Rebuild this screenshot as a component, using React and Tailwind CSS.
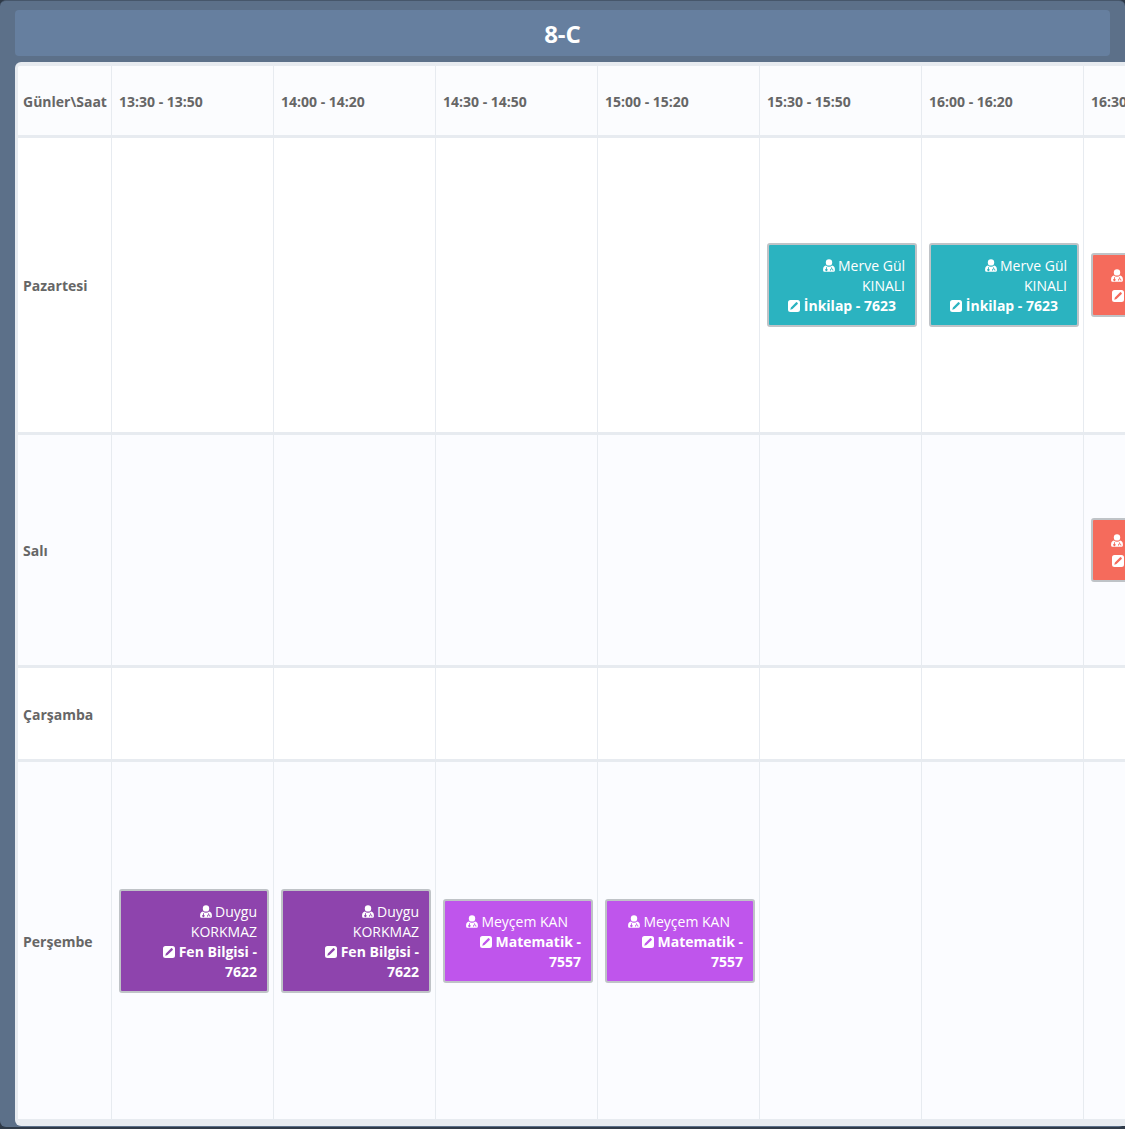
import React from 'react';

const times = ['13:30 - 13:50', '14:00 - 14:20', '14:30 - 14:50', '15:00 - 15:20', '15:30 - 15:50', '16:00 - 16:20', '16:30 - 16:50'];

// teacherGap / lessonGap: trailing space the source leaves after unwrapped text
const merve = { teacher: 'Merve Gül KINALI', lesson: 'İnkilap - 7623', color: 'bg-[#2bb3c0]', lessonGap: 'pr-[9px]' };
const duygu = { teacher: 'Duygu KORKMAZ', lesson: 'Fen Bilgisi - 7622', color: 'bg-[#8e44ad]' };
const meycem = { teacher: 'Meyçem KAN', lesson: 'Matematik - 7557', color: 'bg-[#bf55ec]', teacherGap: 'pr-[13px]' };
const red = { teacher: 'Gülşen ÖZTÜRK', lesson: 'İngilizce - 7601', color: 'bg-[#f56b5c]' };

// keep lessons by column index, empty cells stay null
const rows = [
  { day: 'Pazartesi', height: 'h-[294px]', bg: 'bg-white', lessons: [null, null, null, null, merve, merve, red] },
  { day: 'Salı', height: 'h-[230px]', bg: 'bg-[#fbfcff]', lessons: [null, null, null, null, null, null, red] },
  { day: 'Çarşamba', height: 'h-[91px]', bg: 'bg-white', lessons: [null, null, null, null, null, null, null] },
  { day: 'Perşembe', height: 'h-[357px]', bg: 'bg-[#fbfcff]', lessons: [duygu, duygu, meycem, meycem, null, null, null] },
];

// doctor glyph, head over shoulders with stethoscope cut-outs
const DoctorIcon = () => (
  <svg viewBox="0 0 12 13" className="mr-[3px] inline-block h-[13px] w-[12px] align-[-1px]" fill="currentColor" fillRule="evenodd">
    <circle cx="6" cy="3.4" r="3.2" />
    <path d="M2.9 6.6C3.7 7.4 4.8 7.8 6 7.8s2.3-.4 3.1-1.2c1.7.3 2.8 1.7 2.8 3.6v1c0 1-.7 1.6-1.7 1.6H1.8C.8 12.8.1 12.2.1 11.2v-1c0-1.9 1.1-3.3 2.8-3.6zM3 8.2v1.5a1.2 1.2 0 1 0 .8 0V8zM8.4 8v1.5c-.8.2-1.3.8-1.3 1.6v.6h.7v-.6c0-.5.4-.9.9-.9s.9.4.9.9v.6h.7v-.6c0-.8-.5-1.4-1.3-1.6V8.2z" />
  </svg>
);

// rounded square with the pencil cut out of it
const EditIcon = () => (
  <svg viewBox="0 0 12 12" className="mr-[4px] inline-block h-[12px] w-[12px] align-[-1px]" fill="currentColor" fillRule="evenodd">
    <path d="M2.5 0h7A2.5 2.5 0 0 1 12 2.5v7A2.5 2.5 0 0 1 9.5 12h-7A2.5 2.5 0 0 1 0 9.5v-7A2.5 2.5 0 0 1 2.5 0zM8.1 2.3 2.9 7.5 2.3 9.7 4.5 9.1 9.7 3.9a.6.6 0 0 0 0-.8L8.9 2.3a.6.6 0 0 0-.8 0z" />
  </svg>
);

const LessonCard = ({ lesson }) => (
  <div className={`w-[150px] shrink-0 rounded-[3px] border-2 border-[#bfc3c7] px-[10px] pt-[11px] pb-[9px] text-right text-sm leading-5 text-white ${lesson.color}`}>
    <div>
      <span className={lesson.teacherGap}>
        <DoctorIcon />
        {lesson.teacher}
      </span>
    </div>
    <div className="font-bold">
      <span className={lesson.lessonGap}>
        <EditIcon />
        {lesson.lesson}
      </span>
    </div>
  </div>
);

const Row = ({ row }) => (
  <div className={`box-content flex border-b-[3px] border-[#e7ebf0] ${row.bg} ${row.height}`}>
    <div className="flex w-[93px] shrink-0 items-center pl-[5px] pt-[2px] text-sm font-bold text-[#666]">{row.day}</div>
    {row.lessons.map((lesson, i) => (
      <div key={i} className="flex w-[162px] shrink-0 items-center border-l border-[#e7ebf0] pl-[7px]">
        {lesson && <LessonCard lesson={lesson} />}
      </div>
    ))}
  </div>
);

export default function App() {
  return (
    <div className="h-screen overflow-hidden bg-[#2f3a48] font-['Open_Sans',sans-serif]">
      <div className="flex h-[1127px] flex-col rounded-[6px] border-t border-[#46566a] bg-[#5c7089] pl-[15px] pt-[9px]">
        <div className="mr-[15px] flex h-[46px] shrink-0 items-center justify-center rounded-[4px] bg-[#667f9f] pt-[2px] text-2xl font-bold text-white">
          8-C
        </div>
        <div className="mt-[6px] overflow-hidden rounded-l-[6px] border-y-4 border-l-[3px] border-[#e7ebf0] bg-white">
          <div className="box-content flex h-[69px] border-b-[3px] border-[#e7ebf0] bg-[#fbfcfe] text-sm font-bold text-[#666]">
            <div className="flex w-[93px] shrink-0 items-center whitespace-nowrap pl-[5px] pt-[2px]">Günler\Saat</div>
            {times.map((t) => (
              <div key={t} className="flex w-[162px] shrink-0 items-center whitespace-nowrap border-l border-[#e7ebf0] pl-[7px] pt-[2px]">
                {t}
              </div>
            ))}
          </div>
          {rows.map((row) => (
            <Row key={row.day} row={row} />
          ))}
        </div>
      </div>
    </div>
  );
}
